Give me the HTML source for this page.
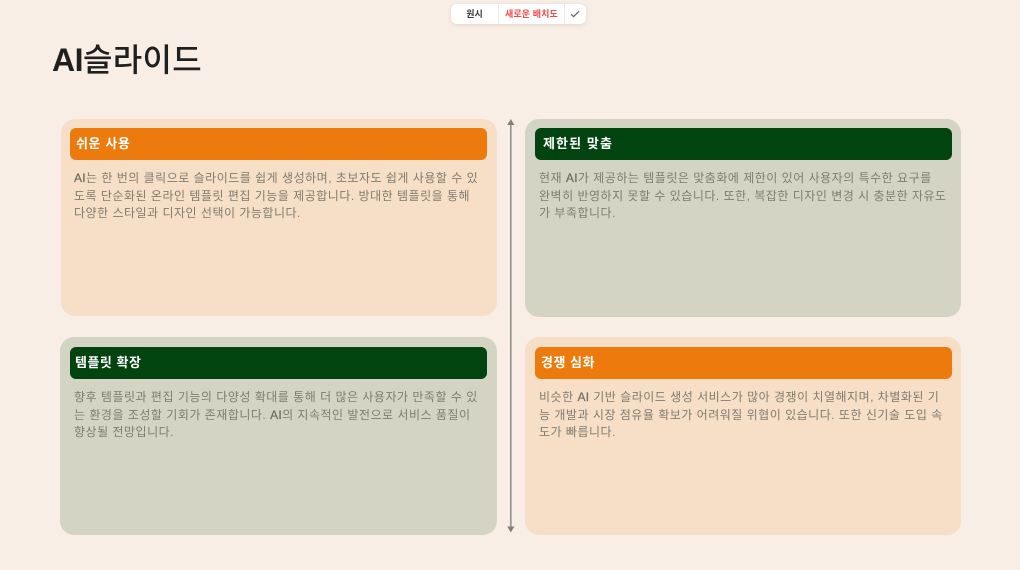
<!DOCTYPE html>
<html lang="ko">
<head>
<meta charset="utf-8">
<title>AI슬라이드</title>
<style>
html,body{margin:0;padding:0}
body{width:1020px;height:570px;overflow:hidden;position:relative;background:#f8eee5;font-family:"Liberation Sans","Noto Sans CJK KR",sans-serif}
.wrap{position:absolute;left:0;top:0;width:1020px;height:570px;filter:blur(.3px)}
.abs{position:absolute}
.title{left:52px;top:40px;font-size:32px;line-height:40px;font-weight:500;color:#1f1f1f;white-space:nowrap;letter-spacing:.3px}
.title b{font-weight:700;letter-spacing:-.5px}
.panel{position:absolute;border-radius:14px}
.o{background:#f7dec7}
.g{background:#d3d4c4}
.hd{position:absolute;left:9px;top:9px;right:10px;height:32px;border-radius:6px;color:#fff;font-size:13px;font-weight:700;line-height:31px;padding-left:6px;white-space:nowrap;letter-spacing:.7px}
.o .hd{background:#ec7a0c}
.g .hd{background:#02440f}
.tx{position:absolute;left:13px;top:51px;font-size:12px;line-height:17.6px;color:#7f7c70;white-space:nowrap;letter-spacing:.5px}
.tx b{font-weight:400;color:#6f6d63;-webkit-text-stroke:.25px #6f6d63;letter-spacing:.3px}
.bar{left:451px;top:4px;width:135px;height:20px;background:#fff;border-radius:6px;box-shadow:0 1px 4px rgba(120,100,80,.18);font-size:9px;line-height:21px;font-weight:700;white-space:nowrap}
.bar span{position:absolute;top:0;text-align:center}
.sep{position:absolute;top:0;width:1px;height:20px;background:#ece8e4}
</style>
</head>
<body>
<div class="wrap">
<div class="abs title"><b>AI</b>슬라이드</div>

<div class="abs bar">
  <span style="left:0;width:47px;color:#3a3a3a">원시</span>
  <div class="sep" style="left:47px"></div>
  <span style="left:48px;width:65px;color:#f04a4a;font-weight:700;letter-spacing:.1px">새로운 배치도</span>
  <div class="sep" style="left:113px"></div>
  <svg class="abs" style="left:119px;top:6px" width="10" height="8" viewBox="0 0 10 8"><path d="M1 4.2 L3.6 6.6 L9 1.2" fill="none" stroke="#6a6a6a" stroke-width="1.3"/></svg>
</div>

<svg class="abs" style="left:505px;top:117px" width="12" height="420" viewBox="0 0 12 420">
  <path d="M5.8 6 V410" stroke="#96958d" stroke-width="1.7" fill="none"/>
  <path d="M5.8 2 L9.4 8 H2.2 Z M5.8 415.5 L9.4 409.5 H2.2 Z" fill="#807f78"/>
</svg>

<div class="panel o" style="left:61px;top:119px;width:436px;height:197px">
  <div class="hd" style="letter-spacing:.6px">쉬운 사용</div>
  <div class="tx"><b>AI</b>는 한 번의 클릭으로 슬라이드를 쉽게 생성하며, 초보자도 쉽게 사용할 수 있<br>도록 단순화된 온라인 템플릿 편집 기능을 제공합니다. 방대한 템플릿을 통해<br>다양한 스타일과 디자인 선택이 가능합니다.</div>
</div>

<div class="panel g" style="left:525px;top:119px;width:436px;height:198px">
  <div class="hd" style="left:10px;right:9px;padding-left:8px;letter-spacing:1.1px">제한된 맞춤</div>
  <div class="tx" style="left:14px">현재 <b>AI</b>가 제공하는 템플릿은 맞춤화에 제한이 있어 사용자의 특수한 요구를<br>완벽히 반영하지 못할 수 있습니다. 또한, 복잡한 디자인 변경 시 충분한 자유도<br>가 부족합니다.</div>
</div>

<div class="panel g" style="left:60px;top:337px;width:437px;height:198px">
  <div class="hd" style="left:10px;top:10px;padding-left:5px;letter-spacing:.5px">템플릿 확장</div>
  <div class="tx" style="left:14px;top:52px">향후 템플릿과 편집 기능의 다양성 확대를 통해 더 많은 사용자가 만족할 수 있<br>는 환경을 조성할 기회가 존재합니다. <b>AI</b>의 지속적인 발전으로 서비스 품질이<br>향상될 전망입니다.</div>
</div>

<div class="panel o" style="left:525px;top:337px;width:436px;height:198px">
  <div class="hd" style="left:10px;top:10px;right:9px;padding-left:6px;letter-spacing:.5px">경쟁 심화</div>
  <div class="tx" style="left:14px;top:52px">비슷한 <b>AI</b> 기반 슬라이드 생성 서비스가 많아 경쟁이 치열해지며, 차별화된 기<br>능 개발과 시장 점유율 확보가 어려워질 위협이 있습니다. 또한 신기술 도입 속<br>도가 빠릅니다.</div>
</div>
</div>
</body>
</html>
